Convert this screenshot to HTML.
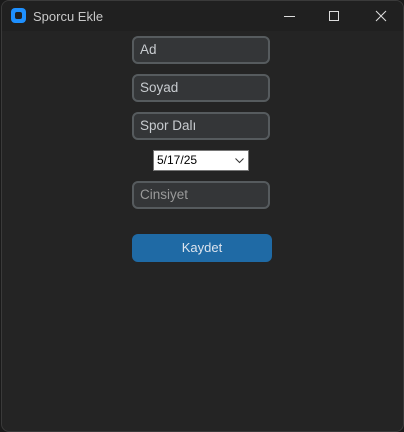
<!DOCTYPE html>
<html><head><meta charset="utf-8"><style>
html,body{margin:0;padding:0;background:#1a1a1a;width:404px;height:431px;overflow:hidden;font-family:"Liberation Sans",sans-serif}
.win{position:absolute;left:1px;top:0;width:401px;height:430px;border:1px solid #3a3a3a;border-radius:8px;background:#242424;overflow:hidden}
.tb{position:absolute;left:0;top:0;width:100%;height:30px;background:#202020}
.icon{position:absolute;left:9px;top:7px;width:15px;height:15px;background:#1e90ff;border-radius:4px}
.icon::after{content:"";position:absolute;left:4px;top:4px;width:7px;height:7px;background:#202020;border-radius:2px}
.title{position:absolute;left:31px;top:8px;font-size:13px;color:#c8c8c8}
.e{position:absolute;left:130px;width:128px;height:24px;border:2px solid #565b5e;border-radius:6px;background:#343638;color:#c8ccd0;font-size:13.5px;line-height:24px;padding-left:6px;box-sizing:content-box}
.ph{color:#9a9a9a}
.date{position:absolute;left:151px;top:149px;width:96px;height:21px;background:#fff;border:1px solid #767676;font-size:12px;line-height:19px;color:#000;padding-left:3px;box-sizing:border-box}
.btn{position:absolute;left:130px;top:233px;width:140px;height:28px;background:#1f6aa5;border-radius:6px;color:#dce4ee;font-size:13px;text-align:center;line-height:28px}
</style></head><body>
<div class="win">
<div class="tb"><div class="icon"></div><div class="title">Sporcu Ekle</div>
<svg style="position:absolute;left:270px;top:0" width="130" height="30" fill="none" stroke="#ddd" stroke-width="1">
<line x1="12" y1="15.5" x2="23" y2="15.5"/>
<rect x="57.5" y="10.5" width="9" height="9"/>
<path d="M104 10l10 10M114 10l-10 10"/></svg></div>
<div class="e" style="top:35px">Ad</div>
<div class="e" style="top:73px">Soyad</div>
<div class="e" style="top:111px">Spor Dalı</div>
<div class="date">5/17/25<svg style="position:absolute;right:4px;top:7px" width="9" height="6" fill="none" stroke="#333"><path d="M0.5 0.5l4 4 4-4"/></svg></div>
<div class="e ph" style="top:180px">Cinsiyet</div>
<div class="btn">Kaydet</div>
</div>
</body></html>
